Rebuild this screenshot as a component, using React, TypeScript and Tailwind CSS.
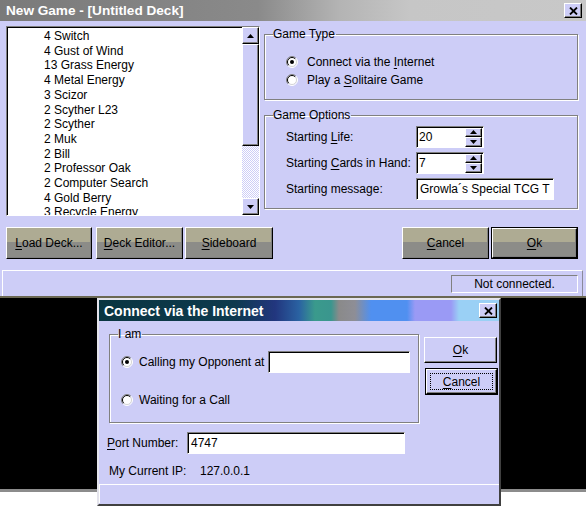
import React from 'react';

const deck = [
  '4 Switch',
  '4 Gust of Wind',
  '13 Grass Energy',
  '4 Metal Energy',
  '3 Scizor',
  '2 Scyther L23',
  '2 Scyther',
  '2 Muk',
  '2 Bill',
  '2 Professor Oak',
  '2 Computer Search',
  '4 Gold Berry',
  '3 Recycle Energy',
];

const raised =
  'border border-t-white border-l-white border-r-black border-b-black shadow-[inset_-1px_-1px_0_#808080]';
const sunken =
  'border border-t-[#808080] border-l-[#808080] border-r-white border-b-white shadow-[inset_1px_1px_0_#000]';
const etched = 'border border-[#808080] shadow-[inset_1px_1px_0_#fff,1px_1px_0_#fff]';

// accelerator letter
const U = ({ children }: { children: React.ReactNode }) => <span className="underline underline-offset-[2px]">{children}</span>;

const Radio = ({ checked }: { checked?: boolean }) => (
  <svg width="12" height="12" viewBox="0 0 12 12" className="shrink-0">
    <circle cx="6" cy="6" r="5" fill="#fff" />
    <path d="M2.1 9.9A5.5 5.5 0 0 1 9.9 2.1" stroke="#808080" fill="none" />
    <path d="M9.9 2.1A5.5 5.5 0 0 1 2.1 9.9" stroke="#fff" fill="none" />
    <path d="M2.8 9.2A4.5 4.5 0 0 1 9.2 2.8" stroke="#000" fill="none" />
    <path d="M9.2 2.8A4.5 4.5 0 0 1 2.8 9.2" stroke="#d4d4d4" fill="none" />
    {checked && <circle cx="6" cy="6" r="2" fill="#000" />}
  </svg>
);

const Arrow = ({ up }: { up?: boolean }) => (
  <svg width="7" height="4" viewBox="0 0 7 4">
    <path d={up ? 'M3.5 0L7 4H0Z' : 'M0 0H7L3.5 4Z'} fill="#000" />
  </svg>
);

const CloseBox = () => (
  <div className={`w-[18px] h-[15px] bg-[#cdcdf7] flex items-center justify-center ${raised}`}>
    <svg width="9" height="8" viewBox="0 0 9 8">
      <path d="M1 0.5L8 7.5M8 0.5L1 7.5" stroke="#000" strokeWidth="1.8" />
    </svg>
  </div>
);

const Spin = () => (
  <div className="flex flex-col w-[17px] h-[19px] shrink-0">
    <div className={`flex-1 flex items-center justify-center bg-[#cdcdf7] ${raised}`}>
      <Arrow up />
    </div>
    <div className={`flex-1 flex items-center justify-center bg-[#cdcdf7] ${raised}`}>
      <Arrow />
    </div>
  </div>
);

const KhakiButton = ({ children, w, def }: { children: React.ReactNode; w: string; def?: boolean }) => (
  <div className={`${w} h-[32px] ${def ? 'border border-black' : ''}`}>
    <div className={`h-full flex items-center justify-center bg-[linear-gradient(#aeab93_0%,#aeab93_46%,#8c8c88_46%,#8c8c88_100%)] ${raised}`}>
      {children}
    </div>
  </div>
);

const App = () => {
  return (
    <div className="w-[586px] h-[510px] bg-white overflow-hidden text-[12px] leading-[14px] text-black font-['Liberation_Sans',Arial,sans-serif]">
      {/* main window */}
      <div className="h-[298px] bg-[#cdcdf7] flex flex-col border-b-2 border-[#6b6853]">
        <div className="h-[21px] flex items-center justify-between pl-[6px] pr-[4px] bg-[linear-gradient(to_right,#7a7a7a,#8a8a8a_44%,#b4b4b4_58%,#c6c6c6_70%,#c8c8c8)]">
          <span className="text-white font-bold text-[13.6px]">New Game - [Untitled Deck]</span>
          <CloseBox />
        </div>

        <div className="flex pl-[6px] pt-[5px] gap-[4px]">
          {/* deck list */}
          <div className={`w-[254px] h-[190px] bg-white flex ${sunken}`}>
            <div className="flex-1 overflow-hidden pl-[37px] pt-[2px] leading-[14.7px]">
              {deck.map((c) => (
                <div key={c}>{c}</div>
              ))}
            </div>
            <div className="w-[17px] flex flex-col">
              <div className={`h-[17px] flex items-center justify-center bg-[#cdcdf7] ${raised}`}>
                <Arrow up />
              </div>
              <div className={`h-[102px] bg-[#cdcdf7] ${raised}`} />
              <div className="flex-1 bg-[image:repeating-conic-gradient(#ffffff_0%_25%,#cdcdf7_0%_50%)] bg-[length:2px_2px]" />
              <div className={`h-[17px] flex items-center justify-center bg-[#cdcdf7] ${raised}`}>
                <Arrow />
              </div>
            </div>
          </div>

          <div className="w-[314px] flex flex-col">
            <fieldset className={`h-[73px] mt-[1px] ${etched}`}>
              <legend className="ml-[8px] pr-[1px] leading-[14px]">Game Type</legend>
              <div className="pl-[21px] pt-[11px] flex flex-col">
                <div className="h-[19px] flex items-center gap-[9px]">
                  <Radio checked />
                  <span>
                    Connect via the <U>I</U>nternet
                  </span>
                </div>
                <div className="h-[19px] flex items-center gap-[9px] -mt-[1px]">
                  <Radio />
                  <span>
                    Play a <U>S</U>olitaire Game
                  </span>
                </div>
              </div>
            </fieldset>

            <fieldset className={`h-[101px] mt-[8px] ${etched}`}>
              <legend className="ml-[8px] pr-[1px] leading-[14px]">Game Options</legend>
              <div className="pl-[21px] pt-[4px] flex flex-col gap-[4px]">
                <div className="h-[22px] flex items-center">
                  <span className="w-[130px]">
                    Starting <U>L</U>ife:
                  </span>
                  <div className={`w-[68px] h-[22px] bg-white flex items-center justify-between pl-[2px] pr-[1px] ${sunken}`}>
                    <span>20</span>
                    <Spin />
                  </div>
                </div>
                <div className="h-[22px] flex items-center">
                  <span className="w-[130px]">
                    Starting <U>C</U>ards in Hand:
                  </span>
                  <div className={`w-[68px] h-[22px] bg-white flex items-center justify-between pl-[2px] pr-[1px] ${sunken}`}>
                    <span>7</span>
                    <Spin />
                  </div>
                </div>
                <div className="h-[22px] flex items-center">
                  <span className="w-[130px]">Starting message:</span>
                  <div className={`w-[138px] h-[22px] bg-white flex items-center pl-[3px] overflow-hidden whitespace-nowrap ${sunken}`}>
                    Growla´s Special TCG T
                  </div>
                </div>
              </div>
            </fieldset>
          </div>
        </div>

        {/* button row */}
        <div className="flex items-center mt-[11px] pl-[6px]">
          <KhakiButton w="w-[86px]">
            <U>L</U>oad Deck...
          </KhakiButton>
          <div className="w-[4px]" />
          <KhakiButton w="w-[87px]">
            <U>D</U>eck Editor...
          </KhakiButton>
          <div className="w-[2px]" />
          <KhakiButton w="w-[88px]">
            <U>S</U>ideboard
          </KhakiButton>
          <div className="w-[129px]" />
          <KhakiButton w="w-[87px]">
            <U>C</U>ancel
          </KhakiButton>
          <div className="w-[2px]" />
          <KhakiButton w="w-[87px]" def>
            <U>O</U>k
          </KhakiButton>
        </div>

        {/* status bar */}
        <div className="mt-[11px] ml-[2px] mr-[3px] flex-1 flex items-center justify-end pr-[4px] border-t border-l border-white border-r border-r-[#8a8a9a]">
          <div className="w-[127px] h-[18px] flex items-center justify-center border border-[#808080] border-b-white border-r-white">
            Not connected.
          </div>
        </div>
      </div>

      {/* desktop behind */}
      <div className="relative h-[194px] bg-black border-b-[3px] border-[#8c8c8c]">
        <div className="absolute left-[97px] top-0 w-[404px] h-[208px] bg-[#cdcdf7] flex flex-col border-2 border-t-[#e4e4ec] border-l-[#e4e4ec] border-r-[#404040] border-b-[#404040]">
          <div className="h-[21px] flex items-center justify-between pl-[5px] pr-[2px] bg-[linear-gradient(to_right,#0a3541_0%,#0e3a4e_34%,#22367e_44%,#2a62a2_50%,#3a9a8c_54%,#3a968e_58%,#8a8a8a_60%,#8e8e96_64%,#5090f0_68%,#5090f0_77%,#9a9af5_79%,#9a9af5_88%,#9ad0f5_90%,#9ad0f5_100%)]">
            <span className="text-white font-bold text-[14px]">Connect via the Internet</span>
            <CloseBox />
          </div>

          <div className="flex">
            <div className="w-[310px] ml-[10px] flex flex-col">
              <fieldset className={`h-[96px] mt-[6px] ${etched}`}>
                <legend className="ml-[8px] pr-[1px] leading-[14px]">I am</legend>
                <div className="pl-[11px] pt-[10px] flex flex-col">
                  <div className="h-[22px] flex items-center">
                    <Radio checked />
                    <span className="ml-[6px] w-[129px]">Calling my Opponent at</span>
                    <div className={`w-[142px] h-[22px] bg-white ${sunken}`} />
                  </div>
                  <div className="h-[22px] mt-[16px] flex items-center">
                    <Radio />
                    <span className="ml-[6px]">Waiting for a Call</span>
                  </div>
                </div>
              </fieldset>

              <div className="h-[22px] mt-[9px] -ml-[2px] flex items-center">
                <span className="w-[80px]">
                  <U>P</U>ort Number:
                </span>
                <div className={`w-[218px] h-[22px] bg-white flex items-center pl-[3px] ${sunken}`}>4747</div>
              </div>

              <div className="h-[16px] mt-[9px] flex items-center">
                <span className="w-[91px]">My Current IP:</span>
                <span>127.0.0.1</span>
              </div>
            </div>

            <div className="ml-[5px] pt-[16px] flex flex-col">
              <div className={`w-[73px] h-[26px] flex items-center justify-center ${raised}`}>
                <U>O</U>k
              </div>
              <div className="w-[73px] h-[27px] mt-[5px] ml-[1px] border border-black">
                <div className={`h-full flex items-center justify-center p-[3px] ${raised}`}>
                  <div className="w-full h-full flex items-center justify-center border border-dotted border-black">
                    <U>C</U>ancel
                  </div>
                </div>
              </div>
            </div>
          </div>

          <div className="mt-auto mb-[1px] h-[19px] border-t border-white border-l" />
        </div>
      </div>
    </div>
  );
};

export default App;
